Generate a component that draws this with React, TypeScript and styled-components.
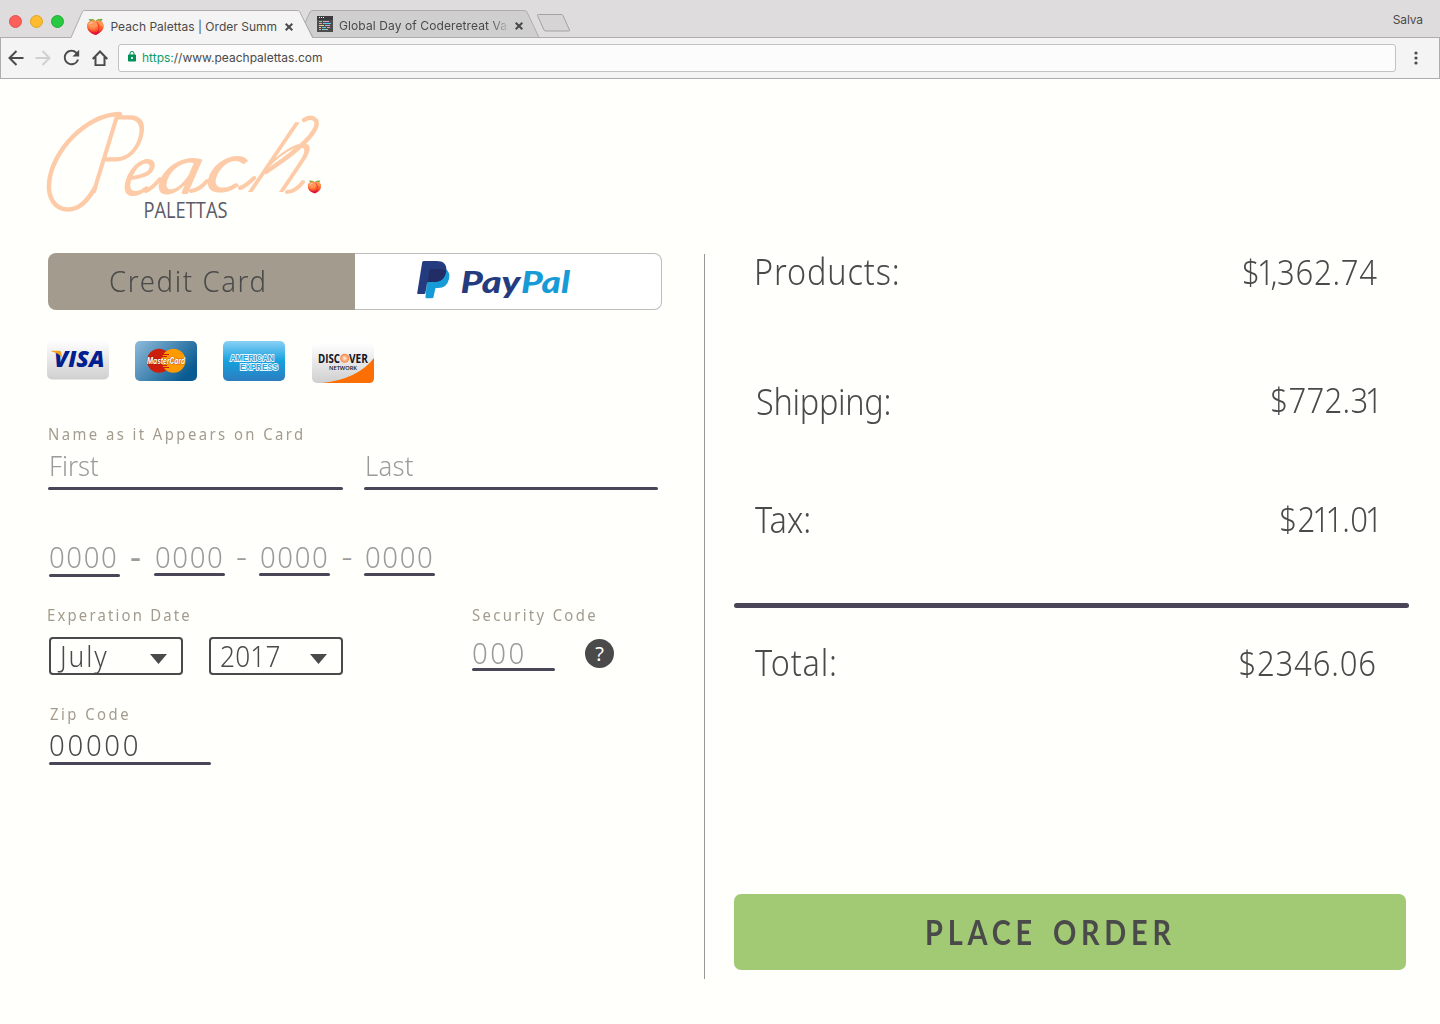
import React from 'react';
import styled, { createGlobalStyle } from 'styled-components';
import { MdLock, MdRefresh } from 'react-icons/md';

const ink = '#4a4a4a';
const line = '#4a4657';
const muted = '#9b9b9b';
const taupe = '#a39c8e';

const GlobalStyle = createGlobalStyle`
  * { box-sizing: border-box; }
  body { margin: 0; background: #fffffc; font-family: 'Noto Sans', 'Open Sans', sans-serif; color: ${ink}; }
  button { font: inherit; color: inherit; border: 0; padding: 0; background: none; text-align: left; }
`;

const Page = styled.div`
  width: 1440px;
  height: 1024px;
  overflow: hidden;
`;

/* Condenses the text face horizontally */
const Squeeze = styled.span<{ $by?: number; $right?: boolean }>`
  display: inline-block;
  transform: scaleX(${p => p.$by ?? 0.9});
  transform-origin: ${p => (p.$right ? 'right' : 'left')} center;
  white-space: pre;
`;

/* ---------- browser chrome ---------- */

const TabStrip = styled.div`
  display: flex;
  align-items: flex-end;
  height: 38px;
  background: #dfdcde;
  font: 400 12px/16px Inter, sans-serif;
  color: ${ink};
  border-bottom: 1px solid #aeacad;
`;

const Lights = styled.div`
  display: flex;
  gap: 8px;
  width: 71px;
  padding: 0 0 9.5px 8.5px;
`;

const Light = styled.i<{ $fill: string; $edge: string }>`
  width: 13px;
  height: 13px;
  border-radius: 50%;
  background: ${p => p.$fill};
  border: 1px solid ${p => p.$edge};
`;

const Tab = styled.div<{ $width: number; $front?: boolean }>`
  position: relative;
  z-index: ${p => (p.$front ? 2 : 1)};
  display: flex;
  width: ${p => p.$width}px;
  height: 28px;
  margin-bottom: -1px;
  margin-left: ${p => (p.$front ? 0 : -8)}px;
`;

const TabShape = styled.svg`
  position: absolute;
  inset: 0;
  overflow: visible;
`;

const TabBody = styled.div<{ $left: number; $top: number }>`
  position: relative;
  display: flex;
  width: 100%;
  padding: ${p => p.$top}px 0 0 ${p => p.$left}px;
`;

const Favicon = styled.span`
  width: 24px;
  margin-top: -1px;
  font: 15px/18px 'Noto Color Emoji', sans-serif;
`;

const CodeFavicon = styled.svg`
  width: 16px;
  height: 16px;
  margin: -1.5px 6px 0 0;
`;

const TabTitle = styled.span<{ $width: number; $fade?: boolean; $spacing: number }>`
  width: ${p => p.$width}px;
  overflow: hidden;
  white-space: nowrap;
  letter-spacing: ${p => p.$spacing}px;
  ${p => p.$fade && 'mask-image: linear-gradient(to right, #000 90%, transparent 101%);'}
`;

const Close = styled.svg`
  width: 8px;
  height: 8px;
  margin: 4px 0 0 7px;
`;

const NewTab = styled.svg`
  width: 36px;
  height: 20px;
  margin: 0 0 4px -5px;
`;

const Profile = styled.span`
  margin: 0 17px 9px auto;
  letter-spacing: -0.1px;
`;

const Toolbar = styled.div`
  display: flex;
  align-items: center;
  height: 41px;
  padding: 0 0 1px 7px;
  background: #f4f4f4;
  border: solid #aeacad;
  border-width: 0 1px 1px;
`;

const Nav = styled.svg`
  width: 16px;
  height: 16px;
  margin-right: 11px;
  fill: none;
  stroke-width: 2;
`;

const Reload = styled(MdRefresh)`
  width: 23px;
  height: 23px;
  margin: 0 9px 0 -2px;
  color: ${ink};
`;

const Omnibox = styled.div`
  display: flex;
  align-items: center;
  width: 1278px;
  height: 28px;
  margin-left: -1px;
  padding-left: 7px;
  background: #fcfcfc;
  border: 1px solid #c2c2c2;
  border-radius: 3px;
  font: 400 12px/16px Inter, sans-serif;
`;

const Lock = styled(MdLock)`
  width: 12px;
  height: 13px;
  margin-right: 4px;
  margin-top: -2px;
  color: #00905a;
`;

const Secure = styled.span`
  color: #0f9d66;
`;

const Menu = styled.svg`
  width: 4px;
  height: 16px;
  margin-left: 17.5px;
  fill: ${ink};
`;

/* ---------- checkout ---------- */

const Main = styled.main`
  display: flex;
  height: 945px;
`;

const Payment = styled.section`
  width: 704px;
  padding-left: 48px;
`;

const Summary = styled.section`
  width: 705px;
  height: 725px;
  margin-top: 175px;
  padding-left: 29px;
  border-left: 1px solid #979797;
`;

const Logo = styled.svg`
  display: block;
  width: 290px;
  height: 125px;
  margin: 21px 0 28px -8px;
  overflow: visible;
`;

const Switch = styled.div`
  display: flex;
  width: 614px;
  height: 57px;
`;

const Method = styled.button<{ $active?: boolean }>`
  display: flex;
  align-items: flex-start;
  width: 307px;
  padding-left: ${p => (p.$active ? 61 : 60)}px;
  font-size: 29px;
  font-weight: 300;
  letter-spacing: 1.7px;
  line-height: 55px;
  ${p =>
    p.$active
      ? 'background: #a39c8e; border-radius: 8px 0 0 8px;'
      : 'background: #fff; border: 1px solid #bdbdbd; border-left: 0; border-radius: 0 8px 8px 0;'}
`;

const PayPal = styled.svg`
  display: block;
  width: 160px;
  height: 42px;
  margin-top: 5px;
  letter-spacing: 0;
`;

const Cards = styled.div`
  display: flex;
  gap: 26px;
  height: 44px;
  margin: 30px 0 40px -1px;
`;

const CardIcon = styled.svg<{ $drop: number }>`
  width: 62px;
  height: 40px;
  margin-top: ${p => p.$drop}px;
  &:last-child { margin-left: 1px; }
`;

const LabelBox = styled.label<{ $spacing: number; $shift?: number }>`
  display: block;
  height: 20px;
  margin-left: ${p => p.$shift ?? 0}px;
  font-size: 16px;
  line-height: 20px;
  letter-spacing: ${p => p.$spacing}px;
  color: ${taupe};
`;

const Label = (p: { $spacing: number; $shift?: number; children: string }) => (
  <LabelBox $spacing={p.$spacing} $shift={p.$shift}><Squeeze $by={0.93}>{p.children}</Squeeze></LabelBox>
);

const FieldBox = styled.div<{
  $width: number; $height: number; $leading: number; $size?: number; $spacing: number; $pad?: number; $filled?: boolean;
}>`
  position: relative;
  width: ${p => p.$width}px;
  height: ${p => p.$height}px;
  margin-left: ${p => (p.$filled ? 1 : 0)}px;
  padding-left: ${p => p.$pad ?? 0}px;
  font-size: ${p => p.$size ?? 29}px;
  font-weight: 300;
  line-height: ${p => p.$leading}px;
  letter-spacing: ${p => p.$spacing}px;
  color: ${p => (p.$filled ? ink : muted)};
  &::after {
    content: '';
    position: absolute;
    left: 0;
    right: 0;
    bottom: 0;
    height: 3px;
    border-radius: 2px;
    background: ${line};
  }
`;

const Field = ({ children, ...rest }: React.ComponentProps<typeof FieldBox>) => (
  <FieldBox {...rest}><Squeeze $by={0.95}>{children}</Squeeze></FieldBox>
);

const Names = styled.div`
  display: flex;
  gap: 21px;
  margin-bottom: 51px;
`;

const NumberRow = styled.div`
  display: flex;
  height: 36px;
  margin: 0 0 28px 1px;
`;

const Dash = styled.span<{ $bold?: boolean; $pad: number }>`
  width: 34px;
  padding-left: ${p => p.$pad}px;
  font-size: 34px;
  font-weight: ${p => (p.$bold ? 400 : 300)};
  line-height: 30px;
  color: ${muted};
`;

const Split = styled.div`
  display: flex;
  height: 70px;
  margin-bottom: 29px;
`;

const Expiry = styled.div`
  width: 424px;
`;

const Selects = styled.div`
  display: flex;
  gap: 26px;
  margin: 12px 0 0 1px;
`;

const Select = styled.button<{ $pad: number; $spacing: number; $leading: number }>`
  display: flex;
  justify-content: space-between;
  width: 134px;
  height: 38px;
  padding: 0 14px 0 ${p => p.$pad}px;
  border: 2px solid ${ink};
  border-radius: 4px;
  font-size: 28.5px;
  font-weight: 300;
  line-height: ${p => p.$leading}px;
  letter-spacing: ${p => p.$spacing}px;
`;

const Arrow = styled.svg`
  width: 17px;
  height: 10px;
  margin-top: 15px;
  fill: ${ink};
`;

const Code = styled.div`
  display: flex;
  gap: 30px;
  margin-top: 12px;
`;

const Help = styled.button`
  width: 29px;
  height: 29px;
  margin-top: 2px;
  border-radius: 50%;
  background: ${ink};
  color: #fff;
  font-size: 20px;
  line-height: 29px;
  text-align: center;
`;

const Row = styled.div<{ $gap: number; $left: number; $right: number }>`
  display: flex;
  justify-content: space-between;
  height: 50px;
  margin-top: ${p => p.$gap}px;
  padding: 0 ${p => p.$right}px 0 ${p => p.$left}px;
  font-size: 36px;
  font-weight: 300;
`;

const Name = styled(Squeeze)<{ $spacing: number }>`
  line-height: 53px;
  letter-spacing: ${p => p.$spacing}px;
`;

const Amount = styled(Squeeze)<{ $leading: number }>`
  font-size: 34.5px;
  line-height: ${p => p.$leading}px;
`;

const Figure = styled.span<{ $spacing: number }>`
  letter-spacing: ${p => p.$spacing}em;
`;

const Rule = styled.hr`
  width: 675px;
  height: 5px;
  margin: 60px 0 0;
  border: 0;
  border-radius: 3px;
  background: ${line};
`;

const Order = styled.button`
  display: block;
  width: 672px;
  height: 76px;
  margin-top: 208px;
  padding-left: 190.5px;
  border-radius: 7px;
  background: #a2ca74;
  font: 700 34px/76px Lato, sans-serif;
  letter-spacing: 5.6px;
  word-spacing: 5px;
`;

const slim = (c?: string) => c === '1' || c === ',';

/* Slim figures sit closer to their neighbours */
const figures = (value: string, base = 0.027) =>
  value.split('').map((c, i) => (
    <Figure key={i} $spacing={base - (slim(value[i + 1]) ? 0.115 : 0) - (slim(c) ? 0.045 : 0)}>{c}</Figure>
  ));

const totals = [
  { name: 'Products:', value: '$1,362.74', gap: -9, leading: 53.5, ls: 1, base: 0.025, left: 20, right: 31.5 },
  { name: 'Shipping:', value: '$772.31', gap: 80, leading: 49.5, ls: -0.3, base: 0.01, left: 22, right: 27 },
  { name: 'Tax:', value: '$211.01', gap: 68, leading: 51.5, ls: 0, base: 0.015, left: 21, right: 27 },
];

const CloseIcon = () => (
  <Close viewBox="0 0 8 8"><path d="M.7.7l6.6 6.6M7.3.7L.7 7.3" stroke={ink} strokeWidth="2" /></Close>
);

const Caret = () => <Arrow viewBox="0 0 17 10"><path d="M0 0h17L8.5 10z" /></Arrow>;

function Chrome() {
  return (
    <>
      <TabStrip>
        <Lights>
          <Light $fill="#fc605b" $edge="#e2514c" />
          <Light $fill="#fdbc2f" $edge="#e0a327" />
          <Light $fill="#28c940" $edge="#22ac36" />
        </Lights>
        <Tab $width={242} $front>
          <TabShape width="242" height="28">
            <path d="M0 28L11.5 1.5Q12.2.5 14 .5H226Q228 .5 228.6 1.5L241.5 28z" fill="#f4f4f4" />
            <path d="M0 27.5L11.5 1.5Q12.2.5 14 .5H226Q228 .5 228.6 1.5L241.5 27.5" fill="none" stroke="#aeacad" />
          </TabShape>
          <TabBody $left={15.5} $top={8.5}>
            <Favicon>🍑</Favicon>
            <TabTitle $width={167} $spacing={0.02}>Peach Palettas | Order Summ</TabTitle>
            <CloseIcon />
          </TabBody>
        </Tab>
        <Tab $width={235}>
          <TabShape width="235" height="28">
            <path d="M0 13L5 2Q6 .5 8 .5H219Q221 .5 222 2L234 27.5H8z" fill="#cfcfcf" stroke="#aeacad" />
          </TabShape>
          <TabBody $left={12} $top={7.5}>
            <CodeFavicon viewBox="0 0 16 16">
              <path d="M0 0h16v16H0z" fill="#4c4c4f" />
              <path d="M0 0h16v4H0z" fill="#3b3b3f" />
              <path d="M2 1.5h1M4 1.5h1M6 1.5h1" stroke="#fff" />
              <path d="M2 5.5h3M5 13.5h6" stroke="#7fd4b8" />
              <path d="M6 5.5h6M8 9.5h5M2 13.5h2" stroke="#d09fd0" />
              <path d="M2 7.5h3M10 11.5h3" stroke="#f89a9a" />
              <path d="M6 7.5h8M5 11.5h4" stroke="#5cc8ec" />
              <path d="M2 9.5h5M2 11.5h2" stroke="#f0d080" />
            </CodeFavicon>
            <TabTitle $width={169} $spacing={0.1} $fade>Global Day of Coderetreat Vale</TabTitle>
            <CloseIcon />
          </TabBody>
        </Tab>
        <NewTab viewBox="0 0 36 20">
          <path d="M2.5 2.5Q2 1.5 3.5 1.5H26Q27.5 1.5 28 2.5L34.5 17Q35 18 33.5 18H11Q9.5 18 9 17z" fill="#d6d4d5" stroke="#a3a1a2" />
        </NewTab>
        <Profile>Salva</Profile>
      </TabStrip>
      <Toolbar>
        <Nav viewBox="0 0 16 16" stroke={ink}><path d="M15.5 8H2M8.5 1L1.5 8l7 7" /></Nav>
        <Nav viewBox="0 0 16 16" stroke="#d0d0d0"><path d="M.5 8H14M7.5 1l7 7-7 7" /></Nav>
        <Reload />
        <Nav viewBox="0 0 16 16" stroke={ink}><path d="M.7 9L8 1.5 15.3 9M3.5 7v8.300h9V7" /></Nav>
        <Omnibox>
          <Lock />
          <span><Secure>https:</Secure>//www.peachpalettas.com</span>
        </Omnibox>
        <Menu viewBox="0 0 4 16">
          <circle cx="2" cy="3" r="1.6" /><circle cx="2" cy="8" r="1.6" /><circle cx="2" cy="13" r="1.6" />
        </Menu>
      </Toolbar>
    </>
  );
}

const BrandLogo = () => (
  <Logo viewBox="40 100 290 125" aria-label="Peach Palettas">
    <g fill="none" stroke="#fecba8" strokeWidth="4.5" strokeLinecap="round">
      <path d="M95 188C86 203 78 210 67 209.500C55 209 48 198 49 184C51 152 86 114 120 114" />
      <path d="M304 120C311 115 319 119 316 127C310 142 284 160 266 172" />
      <path d="M146 191C152 188 156 184 160 179M191 191C198 190 203 186 207 181M240 188C246 186 250 182 254 178M287 192C294 192 299 187 303 182" strokeWidth="4" />
    </g>
    <g fill="#fecba8" fontFamily="Lato, sans-serif" fontStyle="italic">
      <text transform="translate(86 193) skewX(-12)" fontSize="110" fontWeight="300" textLength="46" lengthAdjust="spacingAndGlyphs">P</text>
      <text transform="translate(120 196) rotate(-2) skewX(-16)" fontSize="70" fontWeight="400" textLength="30" lengthAdjust="spacingAndGlyphs">e</text>
      <text transform="translate(154 194) skewX(-16)" fontSize="70" fontWeight="400" textLength="42" lengthAdjust="spacingAndGlyphs">a</text>
      <text transform="translate(202 192) skewX(-16)" fontSize="70" fontWeight="400" textLength="39" lengthAdjust="spacingAndGlyphs">c</text>
      <text transform="translate(244 192) skewX(-29)" fontSize="96" fontWeight="300" textLength="50" lengthAdjust="spacingAndGlyphs">h</text>
    </g>
    <text x="143.5" y="218" fontSize="22.5" textLength="84" lengthAdjust="spacingAndGlyphs" fill="#5a5a68" fontFamily="Open Sans, sans-serif">PALETTAS</text>
    <text x="307.5" y="191" fontSize="12" fontFamily="Noto Color Emoji, sans-serif">🍑</text>
  </Logo>
);

const PayPalLogo = () => (
  <PayPal viewBox="415 259 160 42" aria-label="PayPal">
    <path d="M428 269H446Q450.5 273 449 279Q447 288 438 288H435.500L433.500 297Q433.200 298.300 432 298.300H426.500Q425.300 298.300 425.500 297z" fill="#179bd7" />
    <path d="M422.200 262.300Q422.500 261 424 261H436.500Q447 261 446.300 270.500Q444.500 282 434 282H428.500Q427.200 282 427 283.200L425.400 293Q425.200 294 424 294H418Q417 294 417.200 293z" fill="#253b80" />
    <path d="M429.500 270.300Q430 269 431.500 269H440Q443.500 269 446.300 270.500Q444.500 282 434 282H427.700z" fill="#222d65" />
    <g fontFamily="Lato, sans-serif" fontStyle="italic" fontWeight="900" fontSize="31">
      <text x="460.5" y="292.5" textLength="60" lengthAdjust="spacingAndGlyphs" fill="#253b80">Pay</text>
      <text x="521" y="292.5" textLength="49" lengthAdjust="spacingAndGlyphs" fill="#179bd7">Pal</text>
    </g>
  </PayPal>
);

const CardLogos = () => (
  <Cards>
    <CardIcon viewBox="0 0 62 40" $drop={0} aria-label="Visa">
      <defs>
        <linearGradient id="silver" x2="0" y2="1"><stop stopColor="#fff" /><stop offset="1" stopColor="#cfcfcf" /></linearGradient>
        <linearGradient id="navy" x2="1" y2=".6"><stop stopColor="#8fbbda" /><stop offset="1" stopColor="#085a91" /></linearGradient>
        <linearGradient id="sky" x2="0" y2="1"><stop stopColor="#8ad0f5" /><stop offset=".5" stopColor="#15a2de" /><stop offset="1" stopColor="#2c7cc0" /></linearGradient>
        <radialGradient id="sun"><stop stopColor="#fff0dd" /><stop offset="1" stopColor="#f58240" /></radialGradient>
      </defs>
      <rect width="62" height="39.5" rx="5" fill="url(#silver)" />
      <text x="7" y="26.5" fontFamily="Open Sans, sans-serif" fontStyle="italic" fontWeight="800" fontSize="22" textLength="50.5" lengthAdjust="spacingAndGlyphs" fill="#00208f">VISA</text>
      <path d="M4.500 10.800h7q2.300 0 2.700 2l.8 5Q11.500 12.800 4.500 11.500z" fill="#f7a11a" />
    </CardIcon>
    <CardIcon viewBox="0 0 62 40" $drop={1} aria-label="MasterCard">
      <rect width="62" height="40" rx="5" fill="url(#navy)" />
      <circle cx="24" cy="19.8" r="12" fill="#cc1e0c" />
      <circle cx="38.5" cy="19.8" r="12" fill="#ff9a00" />
      <path d="M28 13.500h6M27 15.500h5M27 24.500h5M28 26.500h6" stroke="#cc1e0c" />
      <text x="12" y="23.3" fontFamily="Inter, sans-serif" fontStyle="italic" fontWeight="700" fontSize="9" textLength="38" lengthAdjust="spacingAndGlyphs" fill="#fff" stroke="#7c1d10" strokeWidth=".6" paintOrder="stroke">MasterCard</text>
    </CardIcon>
    <CardIcon viewBox="0 0 62 40" $drop={1} aria-label="American Express">
      <rect width="62" height="40" rx="5" fill="url(#sky)" />
      <g fontFamily="Liberation Sans, sans-serif" fontWeight="700" fontSize="9.5" fill="#26a5de" stroke="#e8f6fd" strokeWidth="1.8" paintOrder="stroke">
        <text x="7" y="19.5" textLength="44" lengthAdjust="spacingAndGlyphs">AMERICAN</text>
        <text x="17" y="29.2" textLength="38" lengthAdjust="spacingAndGlyphs">EXPRESS</text>
      </g>
    </CardIcon>
    <CardIcon viewBox="0 0 62 40" $drop={3} aria-label="Discover Network">
      <rect width="62" height="40" rx="5" fill="url(#silver)" />
      <path d="M10 40Q46 36 62 15V35q0 5-5 5z" fill="#fb6f05" />
      <g fontFamily="Open Sans, sans-serif" fontWeight="700" fill="#15151f">
        <text x="6" y="19.5" fontSize="11.5" textLength="22" lengthAdjust="spacingAndGlyphs">DISC</text>
        <text x="37" y="19.5" fontSize="11.5" textLength="19" lengthAdjust="spacingAndGlyphs">VER</text>
        <text x="17" y="27" fontSize="6" fontWeight="600" textLength="28" lengthAdjust="spacingAndGlyphs">NETWORK</text>
      </g>
      <circle cx="32.7" cy="15.3" r="4.5" fill="url(#sun)" />
    </CardIcon>
  </Cards>
);

export default function App() {
  return (
    <Page>
      <GlobalStyle />
      <Chrome />
      <Main>
        <Payment>
          <BrandLogo />
          <Switch>
            <Method $active><Squeeze $by={0.95}>Credit Card</Squeeze></Method>
            <Method><PayPalLogo /></Method>
          </Switch>
          <CardLogos />
          <Label $spacing={2.6}>Name as it Appears on Card</Label>
          <Names>
            <Field $width={295} $height={46} $leading={43} $size={27} $spacing={0} $pad={0.7}>First</Field>
            <Field $width={294} $height={46} $leading={43} $size={27} $spacing={0.3} $pad={0.7}>Last</Field>
          </Names>
          <NumberRow>
            <Field $width={71} $height={36} $leading={31} $spacing={1.7} $pad={-0}>0000</Field>
            <Dash $bold $pad={10}>-</Dash>
            <Field $width={71} $height={35} $leading={31} $spacing={1.7} $pad={0.5}>0000</Field>
            <Dash $pad={11}>-</Dash>
            <Field $width={71} $height={35} $leading={31} $spacing={1.7} $pad={0.9}>0000</Field>
            <Dash $pad={11.5}>-</Dash>
            <Field $width={71} $height={35} $leading={31} $spacing={1.7} $pad={1.4}>0000</Field>
          </NumberRow>
          <Split>
            <Expiry>
              <Label $spacing={2.35} $shift={-1.5}>Experation Date</Label>
              <Selects>
                <Select $pad={8.5} $spacing={2} $leading={34.5}><Squeeze $by={0.93}>July</Squeeze><Caret /></Select>
                <Select $pad={9} $spacing={0.2} $leading={35}><Squeeze $by={0.92}>2017</Squeeze><Caret /></Select>
              </Selects>
            </Expiry>
            <div>
              <Label $spacing={2.5} $shift={-0.5}>Security Code</Label>
              <Code>
                <Field $width={83} $height={34} $leading={31} $spacing={2.6}>000</Field>
                <Help>?</Help>
              </Code>
            </div>
          </Split>
          <Label $spacing={2.65} $shift={2.3}>Zip Code</Label>
          <Field $width={162} $height={41} $leading={41} $spacing={2.85} $filled>00000</Field>
        </Payment>
        <Summary>
          {totals.map(t => (
            <Row key={t.name} $gap={t.gap} $left={t.left} $right={t.right}>
              <Name $spacing={t.ls}>{t.name}</Name>
              <Amount $right $leading={t.leading}>{figures(t.value, t.base)}</Amount>
            </Row>
          ))}
          <Rule />
          <Row $gap={28} $left={21} $right={32}>
            <Name $spacing={0.9}>Total:</Name>
            <Amount $right $leading={54}>{figures('$2346.06')}</Amount>
          </Row>
          <Order><Squeeze $by={0.85}>PLACE ORDER</Squeeze></Order>
        </Summary>
      </Main>
    </Page>
  );
}
